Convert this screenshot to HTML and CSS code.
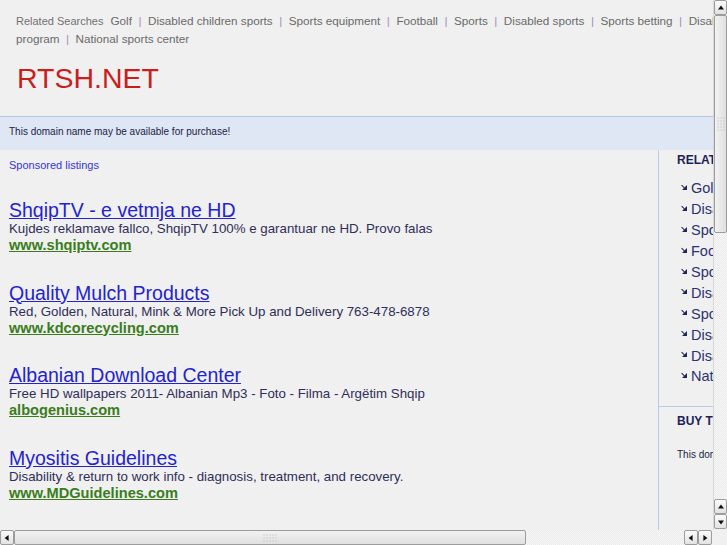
FILE: index.html
```html
<!DOCTYPE html>
<html lang="en">
<head>
    <meta charset="UTF-8">
    <meta name="viewport" content="width=device-width, initial-scale=1.0">
    <title>RTSH.NET</title>
    <link rel="stylesheet" href="styles.css">
</head>
<body>
<div class="frame">
    <div class="viewport">
        <div class="page">
            <div class="header">
                <div class="related"><span class="label">Related Searches</span><a href="#">Golf</a><span class="sep">|</span><a href="#">Disabled children sports</a><span class="sep">|</span><a href="#">Sports equipment</a><span class="sep">|</span><a href="#">Football</a><span class="sep">|</span><a href="#">Sports</a><span class="sep">|</span><a href="#">Disabled sports</a><span class="sep">|</span><a href="#">Sports betting</a><span class="sep">|</span><a href="#">Disabled athletes</a><span class="sep">|</span><a href="#">Disabled sports</a> <a href="#">program</a><span class="sep">|</span><a href="#">National sports center</a></div>
                <div class="logo">RTSH.NET</div>
            </div>

            <div class="notice">This domain name may be available for purchase!</div>

            <div class="content">
                <div class="main">
                    <div class="sponsored">Sponsored listings</div>

                    <div class="ad">
                        <a class="ad-title" href="#">ShqipTV - e vetmja ne HD</a>
                        <div class="ad-desc">Kujdes reklamave fallco, ShqipTV 100% e garantuar ne HD. Provo falas</div>
                        <a class="ad-url" href="#">www.shqiptv.com</a>
                    </div>
                    <div class="ad">
                        <a class="ad-title" href="#">Quality Mulch Products</a>
                        <div class="ad-desc">Red, Golden, Natural, Mink &amp; More Pick Up and Delivery 763-478-6878</div>
                        <a class="ad-url" href="#">www.kdcorecycling.com</a>
                    </div>
                    <div class="ad">
                        <a class="ad-title" href="#">Albanian Download Center</a>
                        <div class="ad-desc">Free HD wallpapers 2011- Albanian Mp3 - Foto - Filma - Argëtim Shqip</div>
                        <a class="ad-url" href="#">albogenius.com</a>
                    </div>
                    <div class="ad">
                        <a class="ad-title" href="#">Myositis Guidelines</a>
                        <div class="ad-desc">Disability &amp; return to work info - diagnosis, treatment, and recovery.</div>
                        <a class="ad-url" href="#">www.MDGuidelines.com</a>
                    </div>
                </div>

                <div class="side">
                    <div class="side-block">
                        <h3>RELATED SEARCHES</h3>
                        <ul class="side-list">
                            <li><span class="arrow"></span><a href="#">Golf</a></li>
                            <li><span class="arrow"></span><a href="#">Disabled children sports</a></li>
                            <li><span class="arrow"></span><a href="#">Sports equipment</a></li>
                            <li><span class="arrow"></span><a href="#">Football</a></li>
                            <li><span class="arrow"></span><a href="#">Sports</a></li>
                            <li><span class="arrow"></span><a href="#">Disabled sports</a></li>
                            <li><span class="arrow"></span><a href="#">Sports betting</a></li>
                            <li><span class="arrow"></span><a href="#">Disabled athletes</a></li>
                            <li><span class="arrow"></span><a href="#">Disabled sports program</a></li>
                            <li><span class="arrow"></span><a href="#">National sports center</a></li>
                        </ul>
                    </div>
                    <div class="side-block buy">
                        <h3>BUY THIS DOMAIN</h3>
                        <p>This domain name may be for sale.</p>
                    </div>
                </div>
            </div>
        </div>
    </div>

    <div class="vscroll">
        <div class="sb-btn up"></div>
        <div class="sb-thumb"><span class="grip"></span></div>
        <div class="sb-track"></div>
        <div class="sb-btn up"></div>
        <div class="sb-btn down"></div>
    </div>
    <div class="hscroll">
        <div class="sb-btn left"></div>
        <div class="sb-thumb"><span class="grip"></span></div>
        <div class="sb-track"></div>
        <div class="sb-btn left"></div>
        <div class="sb-btn right"></div>
    </div>
    <div class="corner"></div>
</div>
</body>
</html>
```

FILE: styles.css
```css
html, body {
    margin: 0;
    padding: 0;
    height: 100%;
    overflow: hidden;
}
body {
    font-family: "Liberation Sans", Arial, sans-serif;
    background-color: #f0f0f0;
    color: #333;
}
a {
    text-decoration: none;
}

/* window frame with the scrollbars */
.frame {
    display: grid;
    grid-template-columns: 713px 14px;
    grid-template-rows: 530px 15px;
    width: 727px;
    height: 545px;
}
.viewport {
    overflow: hidden;
}
.page {
    width: 920px;
}

/* header */
.header {
    padding: 12px 16px 0 16px;
}
.related {
    font-size: 11.7px;
    line-height: 17px;
    color: #666;
}
.related .label {
    font-size: 11px;
    color: #707070;
    margin-right: 7px;
}
.related a {
    color: #6a6a6a;
}
.related .sep {
    color: #a78bbd;
    margin: 0 6.5px;
}
.logo {
    margin: 15px 0 22px 1px;
    font-size: 28.5px;
    line-height: 32px;
    color: #c81e1e;
}

.notice {
    border-top: 1px solid #b3c6e6;
    background-color: #dfe6f4;
    height: 33px;
    line-height: 30px;
    padding-left: 9px;
    font-size: 10px;
    color: #222244;
}

/* content */
.content {
    display: flex;
}
.main {
    width: 649px;
    min-height: 400px;
    padding: 8px 0 0 9px;
    border-right: 1px solid #b8cbec;
}
.sponsored {
    font-size: 11px;
    line-height: 14px;
    color: #3434e0;
    margin-bottom: 28px;
}
.ad {
    margin-bottom: 28.5px;
}
.ad-title {
    display: block;
    width: max-content;
    font-size: 19.5px;
    line-height: 20px;
    color: #2323d0;
    text-decoration: underline;
}
.ad-desc {
    font-size: 13.3px;
    line-height: 17px;
    color: #2e2e58;
}
.ad-url {
    display: block;
    width: max-content;
    font-size: 14.6px;
    line-height: 17px;
    font-weight: bold;
    color: #3a7d1c;
    text-decoration: underline;
}

/* sidebar */
.side {
    width: 261px;
}
.side-block {
    padding: 3px 0 0 18px;
}
.side h3 {
    margin: 0;
    font-size: 12px;
    line-height: 14px;
    color: #1c1f5a;
}
.side-list {
    list-style: none;
    margin: 11px 0 19px 0;
    padding: 0 0 0 4px;
}
.side-list li {
    display: flex;
    align-items: center;
    height: 20.9px;
    font-size: 14.5px;
}
.side-list a {
    color: #2b3272;
}
.arrow {
    position: relative;
    width: 6px;
    height: 6px;
    margin-right: 4px;
    margin-top: -3px;
}
.arrow:before {
    content: "";
    position: absolute;
    right: 0;
    bottom: 0;
    border-left: 5px solid transparent;
    border-bottom: 5px solid #20245a;
}
.arrow:after {
    content: "";
    position: absolute;
    left: 0;
    top: 2px;
    width: 4px;
    height: 1px;
    background: #20245a;
    transform: rotate(45deg);
}
.buy {
    border-top: 1px solid #b8cbec;
    padding-top: 7px;
}
.buy p {
    margin: 20px 0 0 0;
    font-size: 10px;
    line-height: 13px;
    color: #222244;
}

/* scrollbars */
.vscroll, .hscroll {
    display: flex;
    background-color: #f4f4f4;
    background-image: repeating-conic-gradient(#ebebeb 0 25%, #f7f7f7 0 50%);
    background-size: 2px 2px;
}
.vscroll {
    flex-direction: column;
    border-left: 1px solid #d8d8d8;
}
.sb-track {
    flex: 1;
}
.sb-btn, .sb-thumb {
    box-sizing: border-box;
    border: 1px solid #9c9c9c;
    border-radius: 2px;
    background: linear-gradient(#fbfbfb, #e2e2e2);
    position: relative;
}
.vscroll .sb-btn {
    height: 15px;
}
.vscroll .sb-btn.down {
    margin-bottom: 1px;
}
.vscroll .sb-thumb {
    height: 218px;
    background: linear-gradient(90deg, #f2f2f2, #e0e0e0);
}
.hscroll .sb-btn {
    width: 14px;
}
.hscroll .sb-thumb {
    width: 512px;
    background: linear-gradient(#f2f2f2, #e0e0e0);
}
.hscroll .sb-btn.right {
    margin-right: 1px;
}
.sb-btn:after {
    content: "";
    position: absolute;
    left: 50%;
    top: 50%;
    border: 3px solid transparent;
}
.sb-btn.up:after {
    border-bottom: 4px solid #111;
    border-top: 0;
    transform: translate(-50%, -60%);
}
.sb-btn.down:after {
    border-top: 4px solid #111;
    border-bottom: 0;
    transform: translate(-50%, -40%);
}
.sb-btn.left:after {
    border-right: 4px solid #111;
    border-left: 0;
    transform: translate(-60%, -50%);
}
.sb-btn.right:after {
    border-left: 4px solid #111;
    border-right: 0;
    transform: translate(-40%, -50%);
}
.grip {
    position: absolute;
    left: 50%;
    top: 50%;
    transform: translate(-50%, -50%);
    background-image: radial-gradient(circle, #b4b4b4 0.8px, transparent 1px);
    background-size: 3px 3px;
}
.vscroll .grip {
    width: 9px;
    height: 15px;
}
.hscroll .grip {
    width: 15px;
    height: 9px;
}
.corner {
    background-color: #f0f0f0;
}
```
